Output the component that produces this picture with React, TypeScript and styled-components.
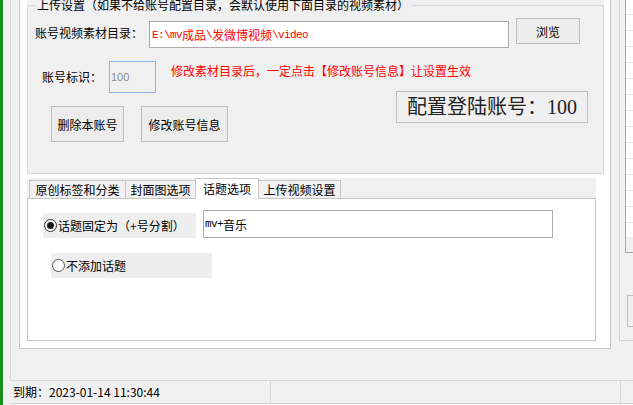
import React from "react";
import styled, { createGlobalStyle } from "styled-components";

const GlobalStyle = createGlobalStyle`
  html, body { margin: 0; padding: 0; }
  body {
    font-family: "Noto Sans CJK SC", "Noto Sans", sans-serif;
    font-size: 12px;
    color: #000;
    background: #f0f0f0;
  }
  * { box-sizing: border-box; }
`;

const Screen = styled.div`
  width: 633px;
  height: 405px;
  overflow: hidden;
  display: flex;
  background: #f0f0f0;
`;

const TaskStrip = styled.div`
  width: 3px;
  flex: none;
  background: #178c1c;
`;

const Gutter = styled.div`
  width: 7px;
  flex: none;
`;

const Window = styled.div`
  flex: 1;
  min-width: 0;
  display: flex;
  flex-direction: column;
`;

const Client = styled.div`
  height: 380px;
  flex: none;
  display: flex;
  align-items: flex-start;
  border-left: 1px solid #d8d8d8;
  padding-left: 8px;
`;

const MainPanel = styled.div`
  width: 592px;
  height: 361px;
  margin-top: -12px;
  flex: none;
  border: 1px solid #c6c6c6;
  background: #fff;
  padding: 0 6px 0 7px;
`;

const GroupArea = styled.div`
  background: #f0f0f0;
  padding-top: 8px;
`;

const GroupBox = styled.fieldset`
  margin: 0;
  padding: 0 0 31px 0;
  min-width: 0;
  border: 1px solid #d9d9d9;
`;

const GroupTitle = styled.legend`
  margin-left: 7px;
  padding: 0 2px;
  line-height: 16px;
  font-size: 12px;
`;

const PathRow = styled.div`
  display: flex;
  align-items: flex-start;
  margin-top: 5px;
  height: 30px;
`;

const FieldLabel = styled.div<{ $left: number; $width: number; $lh: number; $top?: number }>`
  margin-left: ${(p) => p.$left}px;
  margin-top: ${(p) => p.$top ?? 0}px;
  width: ${(p) => p.$width}px;
  line-height: ${(p) => p.$lh}px;
  white-space: nowrap;
`;

const PathBox = styled.div`
  margin-top: 3px;
  width: 360px;
  height: 27px;
  border: 1px solid #ababab;
  background: #fff;
  padding-left: 2px;
  display: flex;
  align-items: center;
  color: #ff0000;
  white-space: nowrap;
`;

const Ascii = styled.span`
  font-family: "Liberation Mono", monospace;
  font-size: 11px;
  letter-spacing: -0.6px;
`;

const PushButton = styled.button<{ $left: number; $top: number; $width: number; $height: number }>`
  margin: ${(p) => p.$top}px 0 0 ${(p) => p.$left}px;
  width: ${(p) => p.$width}px;
  height: ${(p) => p.$height}px;
  padding: 0;
  flex: none;
  border: 1px solid #bdbdbd;
  background: #ececec;
  font-family: "Noto Sans CJK SC", "Noto Sans", sans-serif;
  font-size: 12px;
  color: #000;
`;

const IdRow = styled.div`
  display: flex;
  align-items: flex-start;
  margin-top: 13px;
`;

const IdBox = styled.div`
  width: 47px;
  height: 32px;
  border: 1px solid #8db4e6;
  background: #f0f0f0;
  color: #8a8a8a;
  font-family: "Liberation Sans", sans-serif;
  font-size: 11px;
  line-height: 30px;
  padding-left: 1px;
`;

const Note = styled.div`
  margin: 2px 0 0 15px;
  line-height: 16px;
  color: #ff0000;
  white-space: nowrap;
`;

const ActionRow = styled.div`
  display: flex;
  align-items: flex-start;
  margin-top: -2px;
`;

const LoginButton = styled.button`
  margin: 0 15px 0 auto;
  width: 192px;
  height: 32px;
  padding: 0;
  border: 1px solid #c0c0c0;
  background: #efefef;
  color: #222;
  font-family: "Liberation Serif", "Noto Sans CJK SC", serif;
  font-size: 20px;
  line-height: 28px;
`;

const TabControl = styled.div`
  margin-top: 4px;
  width: 569px;
  display: flex;
  flex-direction: column;
`;

const TabStrip = styled.div`
  height: 20px;
  background: #f0f0f0;
  display: flex;
  align-items: flex-end;
  padding-left: 2px;
`;

const Tab = styled.div<{ $width: number; $active?: boolean }>`
  width: ${(p) => p.$width}px;
  height: ${(p) => (p.$active ? 21 : 18)}px;
  margin-right: -1px;
  margin-bottom: ${(p) => (p.$active ? -1 : 0)}px;
  border: 1px solid #c6c6c6;
  border-bottom: none;
  background: ${(p) => (p.$active ? "#fff" : "#f0f0f0")};
  position: relative;
  z-index: ${(p) => (p.$active ? 1 : 0)};
  text-align: center;
  line-height: ${(p) => (p.$active ? 20 : 17)}px;
  white-space: nowrap;
`;

const TabPage = styled.div`
  height: 143px;
  border: 1px solid #c6c6c6;
  background: #fff;
`;

const TopicRow = styled.div`
  display: flex;
  align-items: flex-end;
  margin-top: 11px;
`;

const RadioOption = styled.div<{ $left: number; $width: number; $top?: number }>`
  margin: ${(p) => p.$top ?? 0}px 0 0 ${(p) => p.$left}px;
  width: ${(p) => p.$width}px;
  height: 25px;
  background: #eeeeee;
  padding-left: 1px;
  display: flex;
  align-items: center;
  white-space: nowrap;
`;

const RadioDot = styled.span<{ $checked?: boolean }>`
  width: 13px;
  height: 13px;
  flex: none;
  margin-right: 1px;
  border-radius: 50%;
  border: 1px solid ${(p) => (p.$checked ? "#333" : "#555")};
  background: #fff;
  display: flex;
  align-items: center;
  justify-content: center;

  &::after {
    content: "";
    width: 7px;
    height: 7px;
    border-radius: 50%;
    background: ${(p) => (p.$checked ? "#1a1a1a" : "transparent")};
  }
`;

const TopicBox = styled.div`
  margin-left: 7px;
  width: 350px;
  height: 28px;
  border: 1px solid #ababab;
  background: #fff;
  padding-left: 1px;
  display: flex;
  align-items: center;
  white-space: nowrap;
`;

const SidePanel = styled.div`
  flex: 1;
  margin: -12px 0 0 8px;
  height: 353px;
  border: 1px solid #cfcfcf;
  border-right: none;
  background: #f0f0f0;
  padding-left: 5px;
  display: flex;
  flex-direction: column;
`;

const ListBox = styled.div`
  height: 264px;
  border: 1px solid #a8a8a8;
  border-right: none;
  background: repeating-linear-gradient(to bottom, #fff 0 15px, #e6e6e6 15px 16px);
  background-position: 0 -7px;
  display: flex;
  flex-direction: column;
`;

const ListFooter = styled.div`
  margin-top: auto;
  height: 15px;
  background: #f0f0f0;
`;

const SmallBox = styled.div`
  margin: 42px 0 0 2px;
  height: 32px;
  border: 1px solid #bdbdbd;
  border-right: none;
  background: #f0f0f0;
`;

const StatusBar = styled.div`
  height: 24px;
  flex: none;
  display: flex;
  border-top: 1px solid #d6d6d6;
  border-bottom: 1px solid #d6d6d6;
`;

const StatusCell = styled.div<{ $width: number }>`
  width: ${(p) => p.$width}px;
  flex: none;
  border-right: 1px solid #d6d6d6;
  padding-left: 3px;
  line-height: 22px;
  white-space: nowrap;
`;

const tabs = [
  { label: "原创标签和分类", width: 97 },
  { label: "封面图选项", width: 71 },
  { label: "话题选项", width: 64, active: true },
  { label: "上传视频设置", width: 83 },
];

export default function App() {
  return (
    <>
      <GlobalStyle />
      <Screen>
        <TaskStrip />
        <Gutter />
        <Window>
          <Client>
            <MainPanel>
              <GroupArea>
                <GroupBox>
                  <GroupTitle>上传设置（如果不给账号配置目录，会默认使用下面目录的视频素材）</GroupTitle>
                  <PathRow>
                    <FieldLabel $left={7} $width={114} $lh={24} $top={3}>账号视频素材目录：</FieldLabel>
                    <PathBox>
                      <Ascii>E:\mv</Ascii>成品<Ascii>\</Ascii>发微博视频<Ascii>\video</Ascii>
                    </PathBox>
                    <PushButton $left={7} $top={0} $width={64} $height={26}>浏览</PushButton>
                  </PathRow>
                  <IdRow>
                    <FieldLabel $left={14} $width={67} $lh={32}>账号标识：</FieldLabel>
                    <IdBox>100</IdBox>
                    <Note>修改素材目录后，一定点击【修改账号信息】让设置生效</Note>
                  </IdRow>
                  <ActionRow>
                    <PushButton $left={23} $top={15} $width={73} $height={36}>删除本账号</PushButton>
                    <PushButton $left={17} $top={15} $width={87} $height={36}>修改账号信息</PushButton>
                    <LoginButton>配置登陆账号：100</LoginButton>
                  </ActionRow>
                </GroupBox>
              </GroupArea>

              <TabControl>
                <TabStrip>
                  {tabs.map((t) => (
                    <Tab key={t.label} $width={t.width} $active={t.active}>
                      {t.label}
                    </Tab>
                  ))}
                </TabStrip>
                <TabPage>
                  <TopicRow>
                    <RadioOption $left={15} $width={153}>
                      <RadioDot $checked />
                      话题固定为（+号分割）
                    </RadioOption>
                    <TopicBox>
                      <Ascii>mv+</Ascii>音乐
                    </TopicBox>
                  </TopicRow>
                  <RadioOption $left={23} $width={161} $top={15}>
                    <RadioDot />
                    不添加话题
                  </RadioOption>
                </TabPage>
              </TabControl>
            </MainPanel>

            <SidePanel>
              <ListBox>
                <ListFooter />
              </ListBox>
              <SmallBox />
            </SidePanel>
          </Client>
          <StatusBar>
            <StatusCell $width={261}>到期：2023-01-14 11:30:44</StatusCell>
            <StatusCell $width={350} />
          </StatusBar>
        </Window>
      </Screen>
    </>
  );
}
